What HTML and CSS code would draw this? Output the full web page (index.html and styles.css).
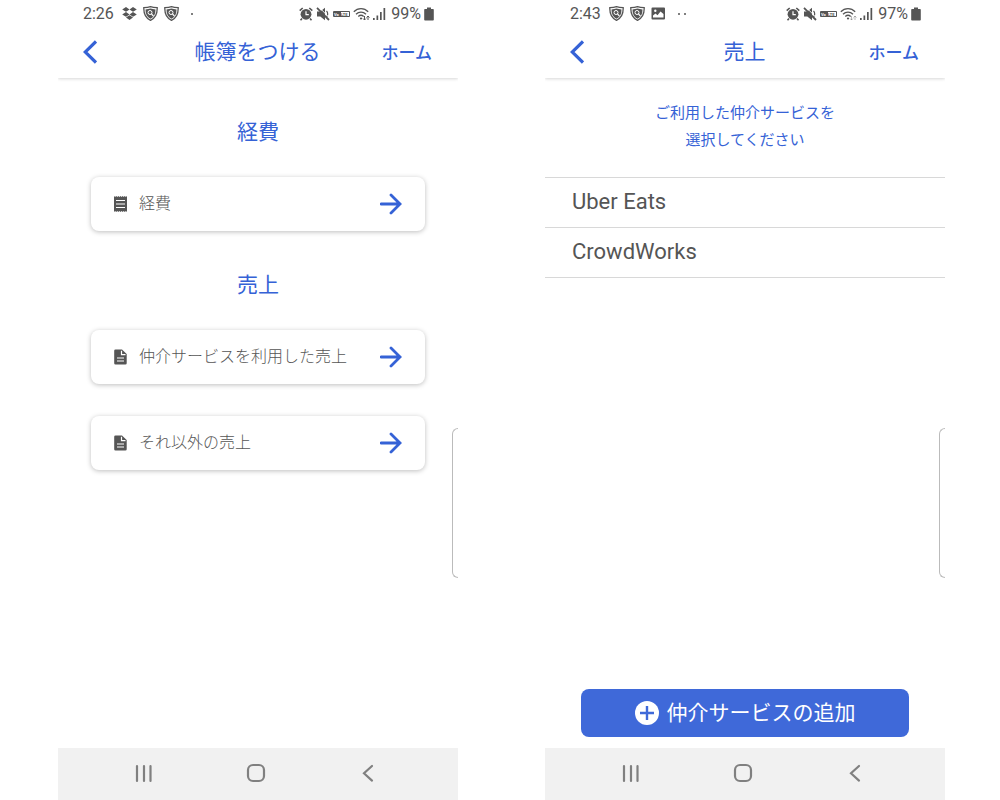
FILE: index.html
```html
<!DOCTYPE html>
<html lang="ja">
<head>
  <meta charset="UTF-8">
  <meta name="viewport" content="width=device-width, initial-scale=1.0">
  <title>帳簿をつける</title>
  <link rel="stylesheet" href="styles.css">
</head>
<body>
  <!-- shared icons -->
  <svg class="sprite" aria-hidden="true">
    <symbol id="dropbox" viewBox="0 0 15 15">
      <path d="M4 1 7.500 3.400 4 5.800.2 3.400zM11 1l3.800 2.400L11 5.800 7.500 3.400zM4 6l3.500 2.400L4 10.800.2 8.400zM11 6l3.800 2.400-3.800 2.400-3.500-2.400zM4 11.500l3.500-2.300 3.500 2.300-3.500 2.400z"/>
    </symbol>
    <symbol id="shield" viewBox="0 0 15 15">
      <path d="M7.500.7C9.300 1.400 11.800 1.700 14.200 1.700c.2 6.300-1.700 10.300-6.700 12.600C2.500 12 .6 8 .8 1.700 3.200 1.700 5.700 1.400 7.500.7z" fill="none" stroke="currentColor" stroke-width="1.300"/>
      <path d="M7.500 2.600c1.500.5 3.200.8 5 .8 0 4.600-1.500 7.500-5 9.300-3.500-1.800-5-4.700-5-9.300 1.800 0 3.500-.3 5-.8z"/>
      <circle cx="7" cy="6.500" r="2" fill="none" stroke="#fff" stroke-width="1"/>
      <path d="m8.500 8 2 2.200" stroke="#fff" stroke-width="1.200"/>
    </symbol>
    <symbol id="picture" viewBox="0 0 15 15">
      <path fill-rule="evenodd" d="M1.500 1.500h11.500a1 1 0 0 1 1 1v10a1 1 0 0 1-1 1h-11.500a1 1 0 0 1-1-1v-10a1 1 0 0 1 1-1zM2 11.500h10.500V8L9.500 5.500 6.500 9.200 4.500 7.500 2 9.500zM4.300 3.500a1.200 1.200 0 1 0 0 2.400 1.200 1.200 0 0 0 0-2.400z"/>
    </symbol>
    <symbol id="alarm" viewBox="0 0 14 14">
      <path d="M.7 3.600 3.700 1M13.300 3.600 10.300 1M3 11.500l-1.500 1.700M11 11.500l1.500 1.700" fill="none" stroke="currentColor" stroke-width="1.600"/>
      <circle cx="7" cy="7.300" r="5.400"/>
      <path d="M7 4.300v3.400h2.800" fill="none" stroke="#fff" stroke-width="1.200"/>
    </symbol>
    <symbol id="mute" viewBox="0 0 14 14">
      <path d="M1 4.500h3.300l4.700-3.800v12.600L4.300 9.500H1z"/>
      <path d="M10.500 4c1.600 1.500 1.600 4.500 0 6" fill="none" stroke="currentColor" stroke-width="1.200"/>
      <path d="M2.800 0 14 11.300" stroke="#fff" stroke-width=".9"/>
      <path d="M1 .8 13 13" stroke="currentColor" stroke-width="1.800"/>
    </symbol>
    <symbol id="wifi" viewBox="0 0 17 14">
      <path d="M.8 4.700c4-4.200 10.400-4.200 14.400 0M3 7.200c2.900-2.900 7.100-2.900 10 0M5.300 9.500c1.600-1.500 3.800-1.500 5.400 0" fill="none" stroke="currentColor" stroke-width="1.300"/>
      <circle cx="8" cy="11.500" r="1.100"/>
    </symbol>
    <symbol id="signal" viewBox="0 0 15 14">
      <path d="M0 11h1.700v2H0zM3.500 8.500h1.700V13H3.500zM7 5h1.700v8H7zM10.500 1h1.700v12h-1.700z"/>
    </symbol>
    <symbol id="battery" viewBox="0 0 10 14">
      <path d="M3 .5h4v1.500h2a.8.8 0 0 1 .8.8v10a.8.8 0 0 1-.8.8H1a.8.8 0 0 1-.8-.8v-10A.8.8 0 0 1 1 2h2z"/>
    </symbol>
    <symbol id="back" viewBox="0 0 14 24">
      <path d="M13 1.500 2.200 12 13 22.500" fill="none" stroke="currentColor" stroke-width="3.200"/>
    </symbol>
    <symbol id="arrow" viewBox="0 0 22 22">
      <path d="M1 11h19M11 2l9 9-9 9" fill="none" stroke="currentColor" stroke-width="2.800" stroke-linecap="round"/>
    </symbol>
    <symbol id="receipt" viewBox="0 0 13 16">
      <path d="m0 0 1.100 1 1.100-1 1.100 1 1-1 1.100 1 1.100-1 1.100 1 1.100-1 1 1 1.100-1 1.100 1L13 0v16l-1.100-1-1.100 1-1.100-1-1 1-1.100-1-1.100 1-1.100-1-1.100 1-1-1-1.100 1-1.100-1L0 16z"/>
      <path d="M2 4.500h9M2 8h9M2 11.500h9" stroke="#fff" stroke-width="1.200"/>
    </symbol>
    <symbol id="doc" viewBox="0 0 13 16">
      <path d="M1.500.5H8L12.700 5v9.200a1.300 1.300 0 0 1-1.300 1.300H1.500a1.300 1.300 0 0 1-1.300-1.300V1.800A1.300 1.300 0 0 1 1.500.5z"/>
      <path d="M7.500 1.700v4h4M3 9h7M3 12h7" fill="none" stroke="#fff" stroke-width="1.200"/>
    </symbol>
    <symbol id="plus" viewBox="0 0 24 24">
      <circle cx="12" cy="12" r="12"/>
      <path d="M12 5v14M5 12h14" stroke="#3f69d9" stroke-width="2.400"/>
    </symbol>
    <symbol id="nav-recent" viewBox="0 0 20 20">
      <path d="M3 3v15M10 3v15M16.500 3v15" stroke="currentColor" stroke-width="2.200" stroke-linecap="round"/>
    </symbol>
    <symbol id="nav-home" viewBox="0 0 20 20">
      <rect x="2" y="2" width="16" height="16" rx="5" fill="none" stroke="currentColor" stroke-width="2.200"/>
    </symbol>
    <symbol id="nav-back" viewBox="0 0 20 20">
      <path d="M14 3 6 10.300l8 7.300" fill="none" stroke="currentColor" stroke-width="2.200" stroke-linecap="round"/>
    </symbol>
  </svg>

  <div class="screens">
    <section class="phone">
      <div class="status">
        <div class="status-left">
          <span class="time">2:26</span>
          <svg width="15" height="15"><use href="#dropbox"/></svg>
          <svg width="15" height="15"><use href="#shield"/></svg>
          <svg width="15" height="15"><use href="#shield"/></svg>
          <svg width="15" height="15"><circle cx="7" cy="8" r="1"/></svg>
        </div>
        <div class="status-right">
          <svg width="14" height="14"><use href="#alarm"/></svg>
          <svg width="14" height="14"><use href="#mute"/></svg>
          <svg width="17" height="14">
            <rect x="0" y="4" width="17" height="6" rx="1"/>
            <rect x="8" y="5" width="8" height="4" fill="#fff"/>
            <text x="1" y="9" fill="#fff" class="volte">Vo</text>
            <text x="8" y="9" class="volte">LTE</text>
          </svg>
          <svg width="17" height="14"><use href="#wifi"/><path d="M11.500 9v4M10 11.500l1.500 1.500 1.500-1.500M15 13V9M13.500 10.500 15 9l1.500 1.500" fill="none" stroke="currentColor"/></svg>
          <svg width="15" height="14"><use href="#signal"/></svg>
          <span>99%</span>
          <svg width="10" height="14"><use href="#battery"/></svg>
        </div>
      </div>
      <header class="app-bar">
        <button class="back" type="button" aria-label="戻る"><svg width="14" height="24"><use href="#back"/></svg></button>
        <h1>帳簿をつける</h1>
        <a class="home" href="#">ホーム</a>
      </header>

      <main class="book">
        <h2>経費</h2>
        <div class="cards">
          <a class="card" href="#">
            <svg width="13" height="16"><use href="#receipt"/></svg>
            <span class="label">経費</span>
            <svg class="arrow" width="22" height="22"><use href="#arrow"/></svg>
          </a>
        </div>
        <h2>売上</h2>
        <div class="cards">
          <a class="card" href="#">
            <svg width="13" height="16"><use href="#doc"/></svg>
            <span class="label">仲介サービスを利用した売上</span>
            <svg class="arrow" width="22" height="22"><use href="#arrow"/></svg>
          </a>
          <a class="card" href="#">
            <svg width="13" height="16"><use href="#doc"/></svg>
            <span class="label">それ以外の売上</span>
            <svg class="arrow" width="22" height="22"><use href="#arrow"/></svg>
          </a>
        </div>
      </main>

      <div class="edge"></div>
      <nav class="nav">
        <button type="button" aria-label="履歴"><svg width="20" height="20"><use href="#nav-recent"/></svg></button>
        <button type="button" aria-label="ホーム"><svg width="20" height="20"><use href="#nav-home"/></svg></button>
        <button type="button" aria-label="戻る"><svg width="20" height="20"><use href="#nav-back"/></svg></button>
      </nav>
    </section>

    <section class="phone">
      <div class="status">
        <div class="status-left">
          <span class="time">2:43</span>
          <svg width="15" height="15"><use href="#shield"/></svg>
          <svg width="15" height="15"><use href="#shield"/></svg>
          <svg width="15" height="15"><use href="#picture"/></svg>
          <svg width="15" height="15"><circle cx="7" cy="8" r="1"/><circle cx="13" cy="8" r="1"/></svg>
        </div>
        <div class="status-right">
          <svg width="14" height="14"><use href="#alarm"/></svg>
          <svg width="14" height="14"><use href="#mute"/></svg>
          <svg width="17" height="14">
            <rect x="0" y="4" width="17" height="6" rx="1"/>
            <rect x="8" y="5" width="8" height="4" fill="#fff"/>
            <text x="1" y="9" fill="#fff" class="volte">Vo</text>
            <text x="8" y="9" class="volte">LTE</text>
          </svg>
          <svg width="17" height="14"><use href="#wifi"/><path class="faint" d="M11.500 9v4M10 11.500l1.500 1.500 1.500-1.500M15 13V9M13.500 10.500 15 9l1.500 1.500" fill="none" stroke="currentColor"/></svg>
          <svg width="15" height="14"><use href="#signal"/></svg>
          <span>97%</span>
          <svg width="10" height="14"><use href="#battery"/></svg>
        </div>
      </div>
      <header class="app-bar">
        <button class="back" type="button" aria-label="戻る"><svg width="14" height="24"><use href="#back"/></svg></button>
        <h1>売上</h1>
        <a class="home" href="#">ホーム</a>
      </header>

      <main class="sales">
        <p class="lead">ご利用した仲介サービスを<br>選択してください</p>
        <ul class="services">
          <li><a href="#">Uber Eats</a></li>
          <li><a href="#">CrowdWorks</a></li>
        </ul>
        <button class="add" type="button">
          <svg width="24" height="24"><use href="#plus"/></svg>
          <span class="label">仲介サービスの追加</span>
        </button>
      </main>

      <div class="edge"></div>
      <nav class="nav">
        <button type="button" aria-label="履歴"><svg width="20" height="20"><use href="#nav-recent"/></svg></button>
        <button type="button" aria-label="ホーム"><svg width="20" height="20"><use href="#nav-home"/></svg></button>
        <button type="button" aria-label="戻る"><svg width="20" height="20"><use href="#nav-back"/></svg></button>
      </nav>
    </section>
  </div>
</body>
</html>
```

FILE: styles.css
```css
* {
  box-sizing: border-box;
}
body {
  margin: 0;
  background: #fff;
  color: #555;
  font-family: Roboto, "Noto Sans CJK JP", sans-serif;
}
svg {
  display: block;
  flex: none;
  fill: currentColor;
}
button {
  border: 0;
  padding: 0;
  background: none;
  color: inherit;
  font: inherit;
  cursor: pointer;
}
a {
  color: inherit;
  text-decoration: none;
}
h1, h2 {
  margin: 0;
  color: #3562d6;
  font-size: 21px;
  font-weight: 400;
  line-height: 30px;
  text-align: center;
}
.sprite {
  position: absolute;
  width: 0;
  height: 0;
}
.volte {
  font-size: 4px;
  font-weight: 700;
}
.faint {
  opacity: 0.4;
}

.screens {
  display: grid;
  grid-template-columns: 1fr 1fr;
  gap: 87px;
  padding: 0 55px 0 58px;
}
.phone {
  position: relative;
  display: flex;
  flex-direction: column;
  min-height: 100vh;
}

/* status bar */
.status {
  display: flex;
  justify-content: space-between;
  height: 27px;
  padding: 0 24px 0 25px;
  font-size: 16px;
}
.status-left,
.status-right {
  display: flex;
  align-items: center;
}
.status-left {
  gap: 6px;
}
.status-right {
  gap: 3px;
}
.time {
  margin-right: 2px;
}

/* title bar */
.app-bar {
  display: grid;
  grid-template-columns: 1fr auto 1fr;
  align-items: center;
  height: 51px;
  padding: 0 26px 2px 25px;
  box-shadow: 0 1px 3px rgba(0, 0, 0, 0.16);
  clip-path: inset(0 0 -6px 0);
  color: #3562d6;
}
.back {
  justify-self: start;
}
.home {
  justify-self: end;
  font-size: 17px;
  font-weight: 500;
}

.book {
  flex: 1;
  padding: 0 33px;
}
.book h2 {
  margin: 39px 0 30px;
}
.cards {
  display: grid;
  gap: 32px;
}
.card {
  display: flex;
  align-items: center;
  gap: 12px;
  height: 54px;
  padding: 0 23px;
  border-radius: 8px;
  box-shadow: 0 1px 5px rgba(0, 0, 0, 0.26);
  font-size: 16px;
  font-weight: 300;
}
.label {
  padding-bottom: 4px;
}
.arrow {
  margin-left: auto;
  color: #3562d6;
}

.sales {
  flex: 1;
  display: flex;
  flex-direction: column;
}
.lead {
  margin: 22px 0 23px;
  color: #3562d6;
  font-size: 15px;
  line-height: 27px;
  text-align: center;
}
.services {
  margin: 0;
  padding: 0;
  border-top: 1px solid #d8d8d8;
  list-style: none;
}
.services a {
  display: block;
  padding: 0 27px 2px;
  border-bottom: 1px solid #d8d8d8;
  font-size: 22px;
  line-height: 47px;
}
.add {
  display: flex;
  align-items: center;
  justify-content: center;
  gap: 8px;
  height: 48px;
  margin: auto 36px 11px;
  border-radius: 8px;
  background: #3f69d9;
  color: #fff;
  font-size: 21px;
}

/* edge panel handle at the right side of the screen */
.edge {
  position: absolute;
  top: 428px;
  right: 0;
  width: 6px;
  height: 150px;
  border: 1px solid #bbb;
  border-right: 0;
  border-radius: 6px 0 0 6px;
}

.nav {
  display: flex;
  align-items: center;
  justify-content: space-between;
  height: 52px;
  padding: 0 80px 2px 76px;
  background: #f1f1f1;
  color: #808080;
}
```
